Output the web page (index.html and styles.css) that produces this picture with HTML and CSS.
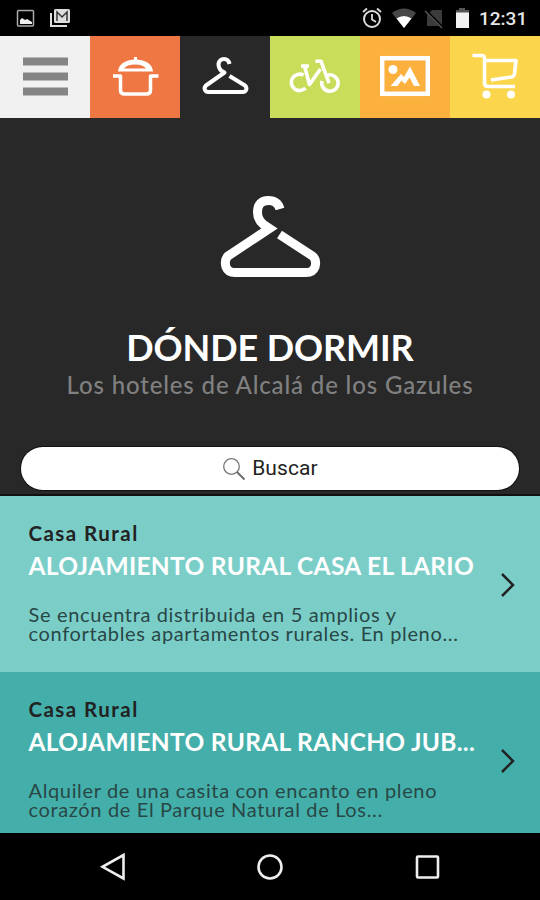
FILE: index.html
```
<!DOCTYPE html>
<html lang="es">
<head>
<meta charset="utf-8">
<title>Dónde dormir</title>
<link rel="stylesheet" href="styles.css">
</head>
<body>
<header class="status">
  <svg class="status-left" width="90" height="36" viewBox="0 0 90 36">
    <rect x="17.5" y="10.500" width="16" height="15.500" rx="1" fill="none" stroke="#aaa" stroke-width="1.500"/>
    <path d="M20 24v-4l2-2 3 2 2-1 5 3v2z" fill="#eee"/>
    <path d="M51 13v13h16" fill="none" stroke="#ddd" stroke-width="2"/>
    <rect x="54" y="9" width="16" height="14" rx="1.500" fill="#ddd"/>
    <path d="M57 21V12l5 5 5-5v9" fill="none" stroke="#333" stroke-width="1.500"/>
  </svg>
  <svg class="status-right" width="119" height="36" viewBox="360 0 119 36">
    <circle cx="372" cy="19" r="8" fill="none" stroke="#ddd" stroke-width="2"/>
    <path d="M372 14v5.500l4 2.500M363 12l4-3.500M381 12l-4-3.500" fill="none" stroke="#ddd" stroke-width="1.800"/>
    <path d="M404 28L392 13q12-9 24 0z" fill="#484848"/>
    <path d="M404 28l-7.500-9.500q7.500-5 15 0z" fill="#fff"/>
    <path d="M427 15l5-5h10v16h-15z" fill="#3b3b3b"/>
    <path d="M425 10l18 18" stroke="#000" stroke-width="3"/>
    <path d="M425 11l17 17" stroke="#5a5a5a" stroke-width="1.500"/>
    <path d="M456 10h3V8h6v2h4v3h-13z" fill="#555"/>
    <rect x="456" y="12.500" width="13" height="15.500" fill="#f2f2f2"/>
  </svg>
  <span class="clock">12:31</span>
</header>
<nav class="tabs">
  <a class="tab tab-menu"><svg viewBox="0 0 90 82"><path d="M23 25.500h45M23 40.500h45M23 55.500h45" stroke="#858585" stroke-width="8"/></svg></a>
  <a class="tab tab-food"><svg viewBox="90 36 90 82"><path d="M113 76h7.500v14q0 4 4 4h22q4 0 4-4V76h8" stroke-width="3.500"/><path fill-rule="evenodd" class="solid" d="M118 71.500q1-10.500 16-12v-2.500h3v2.500q15 1.500 16 12zM124 68.500h22q-3-4-11-4t-11 4z"/></svg></a>
  <a class="tab tab-sleep"><svg viewBox="180 36 90 82"><path d="M229.500 64q-1-5-5.500-5t-5.500 5q0 4 2.500 6.500l3.500 2L206 85.500q-2 2-1.200 4 .8 2.500 3.500 2.500h34.500q2.700 0 3.500-2.500.6-2-1.300-4L229.500 76" stroke-width="4"/></svg></a>
  <a class="tab tab-bike"><svg viewBox="270 36 90 82"><path d="M303.500 75.200A8.200 8.200 0 1 0 305.500 88M327.500 75.200A8.200 8.200 0 1 1 322 81M301 66h8M304.500 66l5 18.500L320.500 69M315.500 61.200h5.500l8 22" stroke-width="3.600"/></svg></a>
  <a class="tab tab-photo"><svg viewBox="360 36 90 82"><rect x="382.200" y="58.200" width="45.600" height="35.600" stroke-width="4.500" class="sharp"/><circle cx="393" cy="69.500" r="4.500" class="solid"/><path d="M390.500 86l10.500-12 3 3 6-10.500L420 86h-6l-4.500-8.500L405 84l-3.500-3.500-4 5.500z" class="solid"/></svg></a>
  <a class="tab tab-shop"><svg viewBox="450 36 90 82"><path d="M472.500 55.500h9q3 0 3 3V83q0 3.500 3.500 3.500h27M485 60.500h31l-1.500 13q-.5 3-3 3.500L491 80" stroke-width="3.600"/><circle cx="486.500" cy="94.500" r="4" class="solid"/><circle cx="511" cy="94.500" r="4" class="solid"/></svg></a>
</nav>
<section class="hero">
  <svg class="hanger" width="110" height="90" viewBox="215 190 110 90"><path d="M280 209q-2.500-8.500-11.500-8.500-11 0-11 12 0 7 6 12l6 4L228 256q-4 4-2 11 2 5.500 9 5.500h71q7 0 9-5.500 2-7-2.500-11l-33-21.500" fill="none" stroke="#fff" stroke-width="9"/></svg>
  <h1>DÓNDE DORMIR</h1>
  <p class="sub">Los hoteles de Alcalá de los Gazules</p>
  <div class="search">
    <svg width="24" height="24" viewBox="0 0 24 24"><circle cx="9.500" cy="9.500" r="7.800" fill="none" stroke="#777" stroke-width="1.300"/><path d="M15 15l7.500 7.500" stroke="#666" stroke-width="1.800"/></svg>
    <span>Buscar</span>
  </div>
</section>
<main>
  <article class="card light">
    <div class="info">
      <p class="kind">Casa Rural</p>
      <h2>ALOJAMIENTO RURAL CASA EL LARIO</h2>
      <p class="desc">Se encuentra distribuida en 5 amplios y<br>confortables apartamentos rurales. En pleno...</p>
    </div>
    <svg class="chev" width="16" height="26" viewBox="0 0 16 26"><path d="M2 2l11 11L2 24" fill="none" stroke="#222" stroke-width="2.500"/></svg>
  </article>
  <article class="card dark">
    <div class="info">
      <p class="kind">Casa Rural</p>
      <h2>ALOJAMIENTO RURAL RANCHO JUB...</h2>
      <p class="desc">Alquiler de una casita con encanto en pleno<br>corazón de El Parque Natural de Los...</p>
    </div>
    <svg class="chev" width="16" height="26" viewBox="0 0 16 26"><path d="M2 2l11 11L2 24" fill="none" stroke="#222" stroke-width="2.500"/></svg>
  </article>
</main>
<footer class="softkeys">
  <svg width="540" height="67" viewBox="0 833 540 67" fill="none" stroke="#eee" stroke-width="2.600"><path d="M123.500 855v23.500L102.500 866.800z"/><circle cx="270" cy="867" r="11.500"/><rect x="417" y="856.500" width="21" height="21" rx="1"/></svg>
</footer>
</body>
</html>
```

FILE: styles.css
```
* { box-sizing: border-box; margin: 0; padding: 0; }
body {
  width: 540px; height: 900px; overflow: hidden;
  display: flex; flex-direction: column;
  background: #282828; font-family: Lato, "Open Sans", sans-serif;
}
svg { display: block; flex: none; }
.status { height: 36px; flex: none; background: #000; display: flex; justify-content: flex-end; }
.status-left { margin-right: auto; }
.clock { width: 61px; font: 500 19px/38px Roboto, sans-serif; color: #e6e6e6; }
.tabs { height: 82px; flex: none; display: grid; grid-template-columns: repeat(6, 90px); }
.tab svg { width: 90px; height: 82px; fill: none; stroke: #fff; stroke-linejoin: round; }
.tab .solid { fill: #fff; stroke: none; }
.tab .sharp { stroke-linejoin: miter; }
.tab-menu { background: #f1f1f1; }
.tab-food { background: #ee7744; }
.tab-sleep { background: #282828; }
.tab-bike { background: #cadd5a; }
.tab-photo { background: #fcb03e; }
.tab-shop { background: #fbd54b; }
.hero { height: 378px; flex: none; padding-top: 72px; display: flex; flex-direction: column; align-items: center; border-bottom: 2px solid #111; }
h1 { margin-top: 45px; height: 44px; font-size: 36px; line-height: 44px; font-weight: 700; color: #fff; white-space: nowrap; letter-spacing: -.1px; }
.sub { margin-top: 1px; font-size: 24px; line-height: 30px; font-weight: 500; color: #808080; white-space: nowrap; letter-spacing: .85px; }
.search { margin-top: 47px; width: 498px; height: 43px; border-radius: 22px; background: #fff; box-shadow: 0 0 0 1px #111; display: flex; align-items: center; justify-content: center; gap: 6px; font: 400 21px/45px Roboto, sans-serif; color: #222; letter-spacing: .1px; }
.card { display: flex; padding-left: 28.5px; overflow: hidden; }
.light { height: 176px; background: #7bcec8; }
.dark { height: 161px; background: #44afaa; }
.info { width: 471px; padding-top: 25px; white-space: nowrap; }
.kind { font-size: 20.5px; line-height: 24px; font-weight: 700; color: #222; letter-spacing: 1.45px; }
h2 { margin-top: 6px; font-size: 24.5px; line-height: 30px; font-weight: 700; color: #fff; letter-spacing: .3px; }
.desc { margin-top: 24px; font-size: 20px; line-height: 19px; color: #284746; letter-spacing: .65px; }
.chev { margin-top: 76px; }
.softkeys { height: 67px; flex: none; background: #000; }
```
